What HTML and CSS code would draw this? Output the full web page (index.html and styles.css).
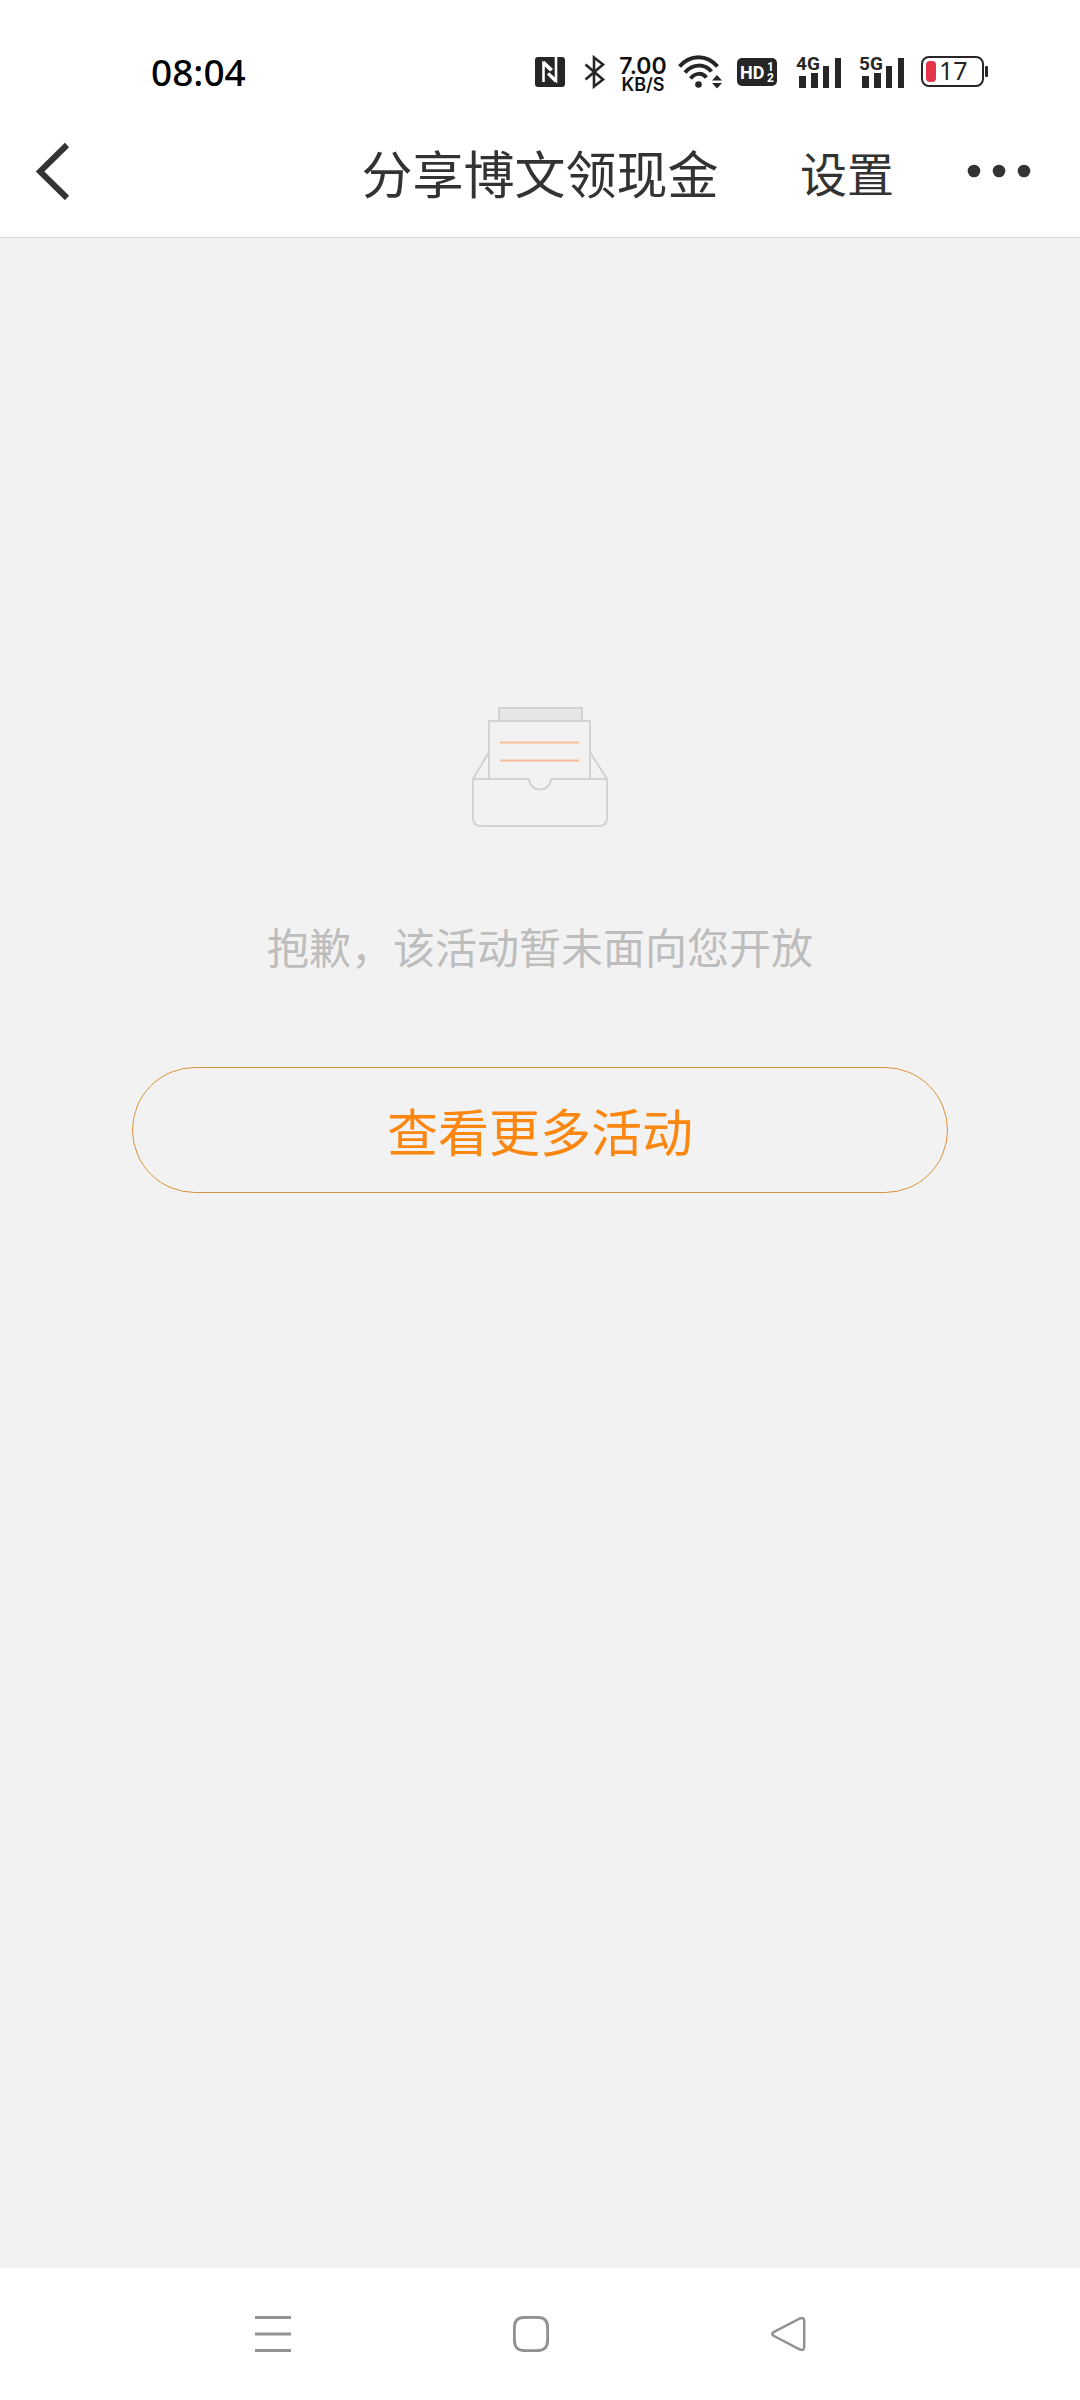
FILE: index.html
```html
<!DOCTYPE html>
<html lang="zh-CN">
<head>
<meta charset="utf-8">
<meta name="viewport" content="width=device-width, initial-scale=1">
<title>分享博文领现金</title>
<link rel="stylesheet" href="styles.css">
</head>
<body>
<div class="status-bar">
  <time class="clock">08:04</time>
  <div class="indicators">
    <svg class="nfc" width="30" height="30" viewBox="0 0 30 30" aria-label="NFC">
      <rect width="30" height="30" rx="3" fill="#262626"/>
      <path d="M8.500 25V6.500L16 13.500M13.500 16.500L21 23.500V5M8.500 6V25M21 0V24" fill="none" stroke="#fff" stroke-width="2.600"/>
      <path d="M8.500 5L17 13M13 16.500L21 24.500" stroke="#fff" stroke-width="3" fill="none"/>
    </svg>
    <svg class="bluetooth" width="22" height="34" viewBox="0 0 22 34" aria-label="蓝牙">
      <path d="M1.500 9.500L19 24.500L10 31.500V2.500L19 9.500L1.500 24.500" fill="none" stroke="#262626" stroke-width="2.600"/>
    </svg>
    <div class="speed"><span class="speed-value">7.00</span><span class="speed-unit">KB/S</span></div>
    <svg class="wifi" width="44" height="34" viewBox="0 0 44 34" aria-label="无线网络">
      <g fill="none" stroke="#262626" stroke-width="4">
        <path d="M1.500 11.500C12 -1 29 -1 39.500 11.500"/>
        <path d="M7 17.500C14.500 8.500 26.500 8.500 33.500 16.500"/>
        <path d="M12.500 23.500C17.500 17.500 24 17.500 28.500 22.500"/>
      </g>
      <circle cx="20.500" cy="29.500" r="3.300" fill="#262626"/>
      <path d="M34 25.500L39 20L44 25.500ZM34 28L39 33.500L44 28Z" fill="#262626"/>
    </svg>
    <svg class="hd" width="40" height="28" viewBox="0 0 40 28">
      <rect width="40" height="28" rx="5" fill="#262626"/>
      <text class="hd-text" x="3" y="21">HD</text>
      <text class="hd-sim" x="30" y="13">1</text>
      <text class="hd-sim" x="30" y="24">2</text>
    </svg>
    <svg class="signal signal-first" width="46" height="42" viewBox="0 -4 46 42">
      <path d="M3 21h7v12h-7zM15 18h7v15h-7zM27 11h6v22h-6zM39 3h6v30h-6z" fill="#262626"/>
      <text class="signal-text" x="0" y="15">4G</text>
    </svg>
    <svg class="signal" width="46" height="42" viewBox="0 -4 46 42">
      <path d="M3 21h7v12h-7zM15 18h7v15h-7zM27 11h6v22h-6zM39 3h6v30h-6z" fill="#262626"/>
      <text class="signal-text" x="0" y="15">5G</text>
    </svg>
    <svg class="battery" width="68" height="38" viewBox="0 -3 68 38">
      <rect x="1" y="1" width="61" height="29" rx="7" fill="none" stroke="#262626" stroke-width="2"/>
      <rect x="5" y="5" width="10" height="21" rx="4" fill="#e63549"/>
      <rect x="64" y="10" width="3" height="11" rx="1" fill="#262626"/>
      <text class="battery-text" x="18" y="24">17</text>
    </svg>
  </div>
</div>
<header class="header">
  <button class="icon-button back" type="button" aria-label="返回">
    <svg width="36" height="58" viewBox="0 0 36 58"><path d="M31 3L4 29.500L31 56" fill="none" stroke="#333" stroke-width="6"/></svg>
  </button>
  <h1 class="title">分享博文领现金</h1>
  <div class="actions">
    <button class="settings" type="button">设置</button>
    <button class="icon-button" type="button" aria-label="更多">
      <svg width="64" height="14" viewBox="0 0 64 14" fill="#333"><circle cx="7" cy="7" r="6.300"/><circle cx="32" cy="7" r="6.300"/><circle cx="57" cy="7" r="6.300"/></svg>
    </button>
  </div>
</header>
<main class="content">
  <svg class="empty-icon" width="136" height="120" viewBox="0 0 136 120" fill="none" stroke="#d3d3d3" stroke-width="2" aria-hidden="true">
    <path d="M27 13V1H110V13" fill="#e6e6e6"/>
    <path d="M17 72V14H118V72"/>
    <path d="M17 45L1 72M118 45L135 72"/>
    <path d="M1 72H57C58 86 78 86 79 72H135V111Q135 119 127 119H9Q1 119 1 111Z"/>
    <path d="M28 35.500H107M28 53.500H107" stroke="#f4bd96"/>
  </svg>
  <p class="message">抱歉，该活动暂未面向您开放</p>
  <button class="more-button" type="button">查看更多活动</button>
</main>
<nav class="system-nav" aria-label="系统导航">
  <button class="icon-button" type="button" aria-label="最近任务">
    <svg width="36" height="36" viewBox="0 0 36 36" stroke="#929292" stroke-width="3"><path d="M0 1.500H36M0 18H36M0 34.500H36"/></svg>
  </button>
  <button class="icon-button" type="button" aria-label="主屏幕">
    <svg width="36" height="36" viewBox="0 0 36 36" fill="none" stroke="#929292" stroke-width="3"><path d="M10 1.500Q18 1 26 1.500Q34 2 34.500 10Q35 18 34.500 26Q34 34 26 34.500Q18 35 10 34.500Q2 34 1.500 26Q1 18 1.500 10Q2 2 10 1.500Z"/></svg>
  </button>
  <button class="icon-button" type="button" aria-label="返回上一页">
    <svg width="36" height="36" viewBox="0 0 36 36" fill="none" stroke="#929292" stroke-width="2.500"><path d="M2.500 16.200L29 2.500Q33.200 1 33.200 5V31Q33.200 35 29 33.500L2.500 19.800Q0 18 2.500 16.200Z"/></svg>
  </button>
</nav>
</body>
</html>
```
FILE: styles.css
```css
* {
  box-sizing: border-box;
}

body {
  margin: 0;
  min-height: 100vh;
  display: flex;
  flex-direction: column;
  background: #f2f2f2;
  color: #333;
  font-family: "Noto Sans CJK SC", sans-serif;
}

button {
  font: inherit;
  color: inherit;
  background: none;
  border: 0;
  padding: 0;
  cursor: pointer;
}

svg {
  display: block;
}

.status-bar {
  display: flex;
  justify-content: space-between;
  align-items: center;
  padding: 40px 91px 0 151px;
  background: #fff;
}

.clock {
  font: 500 37px/64px "Noto Sans", sans-serif;
  color: #000;
}

.indicators {
  display: flex;
  align-items: center;
}

.bluetooth {
  margin-left: 19px;
}

.speed {
  display: flex;
  flex-direction: column;
  align-items: center;
  margin-left: 14px;
  padding-top: 4px;
  width: 46px;
  font-family: Inter, sans-serif;
  font-weight: 600;
  color: #111;
}

.speed-value {
  font-size: 23px;
  line-height: 20px;
}

.speed-unit {
  font-size: 18px;
  line-height: 17px;
}

.wifi {
  margin-left: 12px;
}

.hd {
  margin-left: 15px;
}

.hd-text {
  font: bold 18px Roboto, sans-serif;
  fill: #fff;
}

.hd-sim {
  font: bold 12px Roboto, sans-serif;
  fill: #fff;
}

.signal {
  margin-left: 17px;
}

.signal-first {
  margin-left: 19px;
}

.signal-text {
  font: bold 19px Roboto, sans-serif;
  fill: #262626;
}

.battery {
  margin-left: 16px;
}

.battery-text {
  font: 25px "Noto Sans", sans-serif;
  fill: #262626;
}

.header {
  display: grid;
  grid-template-columns: 1fr auto 1fr;
  align-items: center;
  height: 134px;
  padding: 0 36px;
  background: #fff;
  border-bottom: 1px solid #dcdcdc;
}

.back {
  justify-self: start;
}

.title,
.settings {
  padding-top: 3px;
  line-height: 76px;
}

.title {
  margin: 0;
  font-size: 51px;
  font-weight: 400;
}

.actions {
  display: flex;
  align-items: center;
  justify-content: flex-end;
  gap: 73px;
  padding-right: 13px;
}

.settings {
  font-size: 47px;
}

.content {
  flex: 1;
  display: flex;
  flex-direction: column;
  align-items: center;
  padding: 469px 132px 0;
}

.message {
  margin: 88px 0 90px;
  font-size: 42px;
  line-height: 62px;
  color: #bdbdbd;
}

.more-button {
  width: 100%;
  padding: 24px 0;
  border: 1px solid #d99438;
  border-radius: 63px;
  font-size: 51px;
  line-height: 76px;
  color: #fb8610;
}

.system-nav {
  display: flex;
  align-items: center;
  justify-content: center;
  gap: 222px;
  height: 132px;
  padding-right: 18px;
  background: #fff;
}
```
